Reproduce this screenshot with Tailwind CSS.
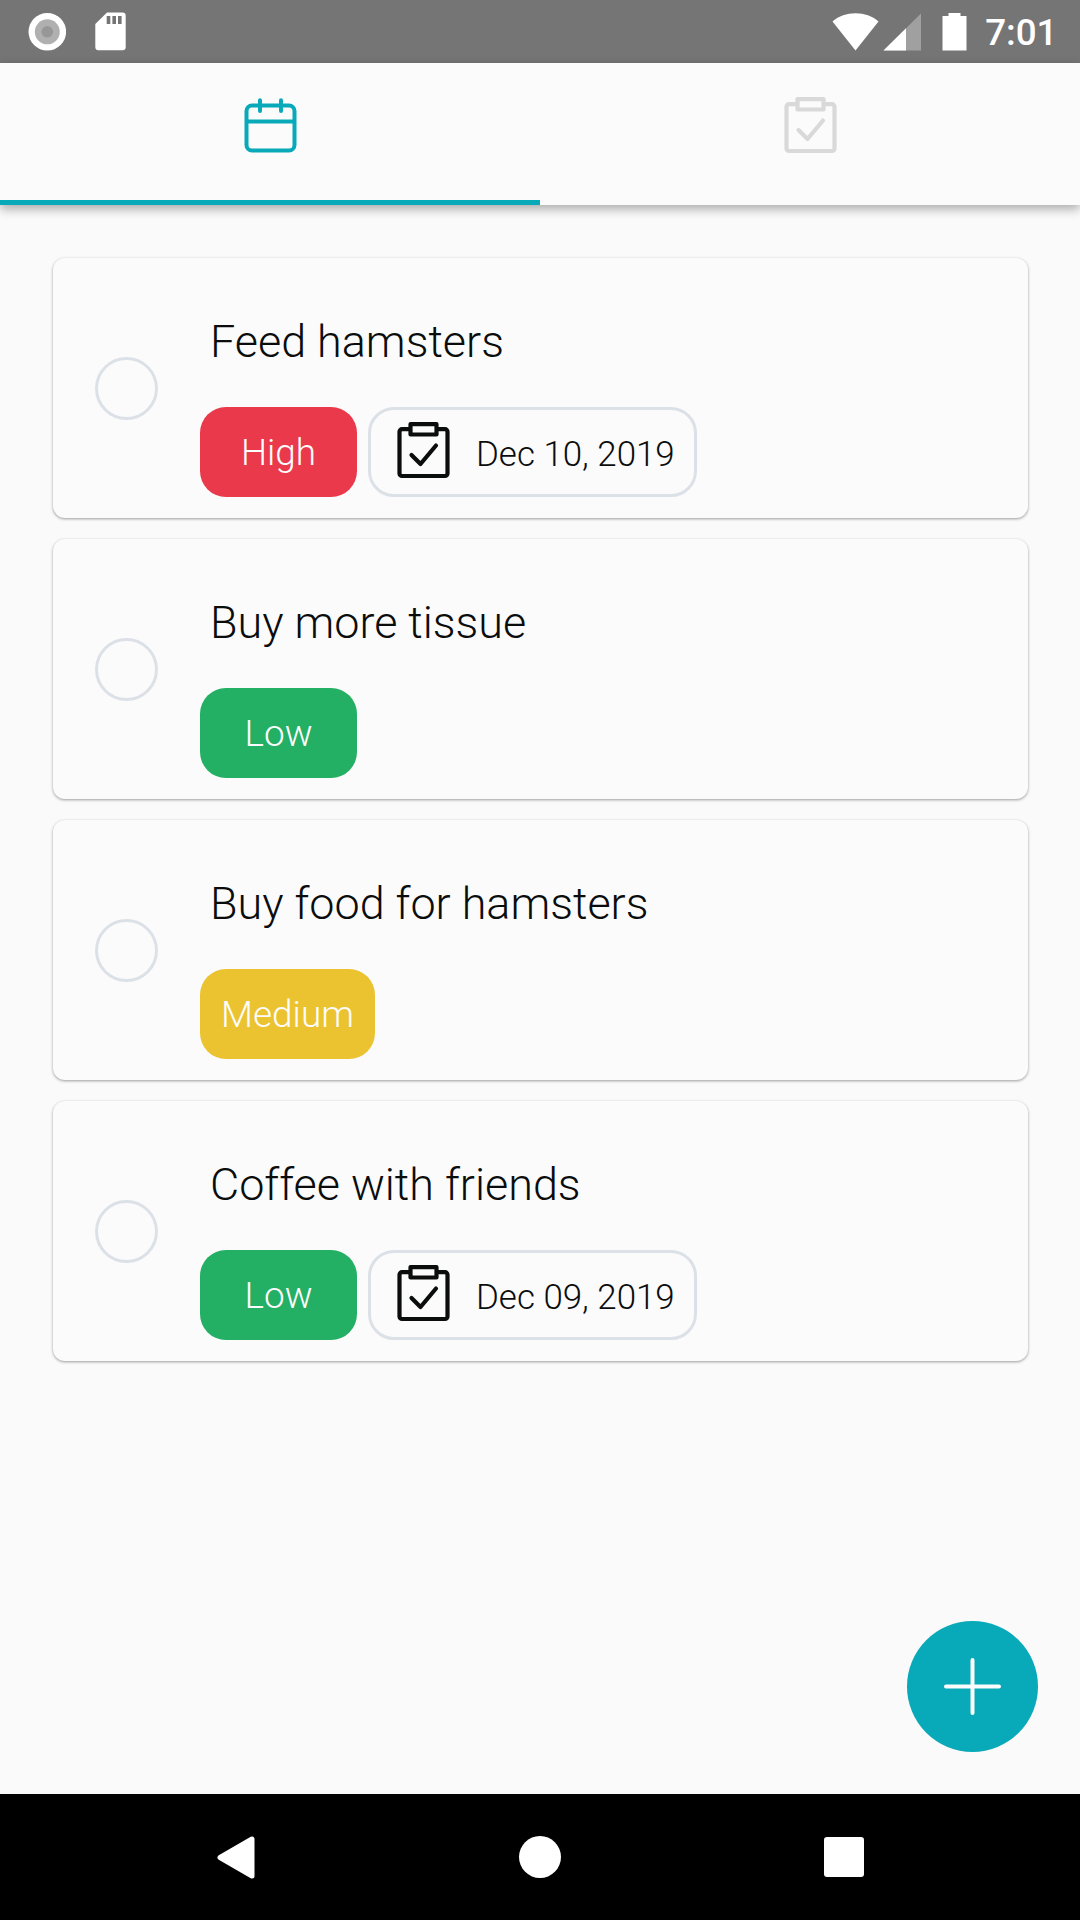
<!DOCTYPE html>
<html lang="en">
<head>
<meta charset="utf-8">
<title>Tasks</title>
<script src="https://cdn.jsdelivr.net/npm/@tailwindcss/browser@4"></script>
</head>
<body class="flex h-[1920px] w-[1080px] flex-col overflow-hidden bg-[#fafafa] font-[Roboto,sans-serif] text-[#0b0d0d]">
<svg class="hidden">
  <symbol id="clipboard" viewBox="0 0 63 63">
    <g fill="none" stroke="currentColor" stroke-width="4.200" stroke-linejoin="round" stroke-linecap="round">
      <path d="M17 11.200H10A2.500 2.500 0 0 0 7.500 13.700V55.500A2.500 2.500 0 0 0 10 58H53A2.500 2.500 0 0 0 55.500 55.500V13.700A2.500 2.500 0 0 0 53 11.200H46"/>
      <path d="M18.500 6.200H44.500V16.500H18.500Z"/>
      <path d="M19.500 37L28.500 46L44 27.500"/>
    </g>
  </symbol>
</svg>

<header class="flex h-[63px] shrink-0 items-center bg-[#757575] text-white">
  <svg class="ml-[28px] size-[38px]" viewBox="0 0 38 38"><circle cx="19.300" cy="18.800" r="18.800" fill="#fff"/><circle cx="19.300" cy="18.800" r="12.500" fill="#b0b0b0"/><circle cx="19.300" cy="18.800" r="5.800" fill="#979797"/></svg>
  <svg class="ml-[29px] h-[39px] w-[32px]" viewBox="0 0 32 39"><path d="M12 0.500H27.500A3.200 3.200 0 0 1 30.700 3.700V35A3.200 3.200 0 0 1 27.500 38.200H3.500A3.200 3.200 0 0 1 0.300 35V12Z" fill="#fff"/><path d="M11.700 4h3.600v8h-3.600zM17.400 4h3.600v8h-3.600zM23 4h3.600v8H23z" fill="#757575"/></svg>
  <svg class="ml-auto h-[38px] w-[47px]" viewBox="0 0 47 38"><path d="M0.500 8.500C7 3 14.500 0.300 23.500 0.300S40 3 46.500 8.500L23.500 37.500Z" fill="#fff"/></svg>
  <svg class="ml-[4px] h-[38px] w-[38px]" viewBox="0 0 38 38"><path d="M38 0.500V37.500H0.500Z" fill="#a0a0a0"/><path d="M23 15.300V37.500H0.500Z" fill="#fff"/></svg>
  <svg class="ml-[21px] h-[38px] w-[25px]" viewBox="0 0 25 38"><path d="M6.500 0H18.500V3H24.500V37.500H0.500V3H6.500Z" fill="#fff"/></svg>
  <span class="mt-[3px] mr-[22.500px] ml-[18px] text-[36.750px] leading-[50px] font-medium">7:01</span>
</header>

<nav class="relative z-10 grid h-[142px] shrink-0 grid-cols-2 bg-[#fbfbfb] shadow-[0_4px_10px_rgba(0,0,0,0.32)]">
  <div class="flex justify-center border-b-[5px] border-[#08a9b8] pt-[31px] text-[#08a9b8]">
    <svg class="size-[63px]" viewBox="0 0 63 63" fill="none" stroke="currentColor" stroke-width="4" stroke-linecap="round"><rect x="7.500" y="11.500" width="48" height="45" rx="5.500"/><path d="M8 27.500H55M21 6.200V17M42 6.200V17"/></svg>
  </div>
  <div class="flex justify-center pt-[30px] text-[#d9d9d9]">
    <svg class="size-[63px]"><use href="#clipboard"/></svg>
  </div>
</nav>

<main class="relative flex grow flex-col gap-[21px] px-[52.500px] pt-[53px]">
  <article class="flex h-[260px] rounded-[12px] bg-[#fbfbfb] pl-[42.500px] shadow-[0_1px_3px_rgba(0,0,0,0.38)]">
    <span class="mt-[99px] size-[63px] rounded-full border-3 border-[#dce1e8]"></span>
    <div class="pt-[54px] pl-[42px]">
      <h2 class="pl-[10px] text-[44.900px] leading-[60px] font-light">Feed hamsters</h2>
      <div class="mt-[35px] flex gap-[11px]">
        <span class="flex h-[90px] w-[157px] items-center justify-center rounded-[26px] bg-[#e9394b] pt-[2px] text-[36.900px] font-light text-[#fcfcfc]">High</span>
        <span class="flex h-[90px] w-[329px] items-center rounded-[26px] border-3 border-[#dce1e8] pl-[21px] font-light"><svg class="-mt-[5px] mr-[21px] size-[63px]"><use href="#clipboard"/></svg><span class="mt-[7px] text-[34.900px]">Dec 10, 2019</span></span>
      </div>
    </div>
  </article>

  <article class="flex h-[260px] rounded-[12px] bg-[#fbfbfb] pl-[42.500px] shadow-[0_1px_3px_rgba(0,0,0,0.38)]">
    <span class="mt-[99px] size-[63px] rounded-full border-3 border-[#dce1e8]"></span>
    <div class="pt-[54px] pl-[42px]">
      <h2 class="pl-[10px] text-[44.900px] leading-[60px] font-light">Buy more tissue</h2>
      <div class="mt-[35px] flex gap-[11px]">
        <span class="flex h-[90px] w-[157px] items-center justify-center rounded-[26px] bg-[#23af64] pt-[2px] text-[36.900px] font-light text-[#fcfcfc]">Low</span>
      </div>
    </div>
  </article>

  <article class="flex h-[260px] rounded-[12px] bg-[#fbfbfb] pl-[42.500px] shadow-[0_1px_3px_rgba(0,0,0,0.38)]">
    <span class="mt-[99px] size-[63px] rounded-full border-3 border-[#dce1e8]"></span>
    <div class="pt-[54px] pl-[42px]">
      <h2 class="pl-[10px] text-[44.900px] leading-[60px] font-light">Buy food for hamsters</h2>
      <div class="mt-[35px] flex gap-[11px]">
        <span class="flex h-[90px] w-[175px] items-center justify-center rounded-[26px] bg-[#ebc331] pt-[2px] text-[36.900px] font-light text-[#fcfcfc]">Medium</span>
      </div>
    </div>
  </article>

  <article class="flex h-[260px] rounded-[12px] bg-[#fbfbfb] pl-[42.500px] shadow-[0_1px_3px_rgba(0,0,0,0.38)]">
    <span class="mt-[99px] size-[63px] rounded-full border-3 border-[#dce1e8]"></span>
    <div class="pt-[54px] pl-[42px]">
      <h2 class="pl-[10px] text-[44.900px] leading-[60px] font-light">Coffee with friends</h2>
      <div class="mt-[35px] flex gap-[11px]">
        <span class="flex h-[90px] w-[157px] items-center justify-center rounded-[26px] bg-[#23af64] pt-[2px] text-[36.900px] font-light text-[#fcfcfc]">Low</span>
        <span class="flex h-[90px] w-[329px] items-center rounded-[26px] border-3 border-[#dce1e8] pl-[21px] font-light"><svg class="-mt-[5px] mr-[21px] size-[63px]"><use href="#clipboard"/></svg><span class="mt-[7px] text-[34.900px]">Dec 09, 2019</span></span>
      </div>
    </div>
  </article>

  <!-- Floating add button -->
  <button aria-label="Add task" class="absolute right-[42px] bottom-[42px] flex size-[131px] items-center justify-center rounded-full bg-[#08a9b8]">
    <svg class="size-[63px]" viewBox="0 0 63 63" fill="none" stroke="#fcfcfc" stroke-width="4" stroke-linecap="round"><path d="M31.500 5V58M5 31.500H58"/></svg>
  </button>
</main>

<footer class="flex h-[126px] shrink-0 items-center bg-black">
  <svg class="ml-[217px] h-[43px] w-[38px]" viewBox="0 0 38 43"><path d="M3 21.500L35 3V40Z" fill="#fff" stroke="#fff" stroke-width="5" stroke-linejoin="round"/></svg>
  <span class="ml-[264px] size-[42px] rounded-full bg-white"></span>
  <span class="ml-[263px] size-[40px] rounded-[3px] bg-white"></span>
</footer>
</body>
</html>
